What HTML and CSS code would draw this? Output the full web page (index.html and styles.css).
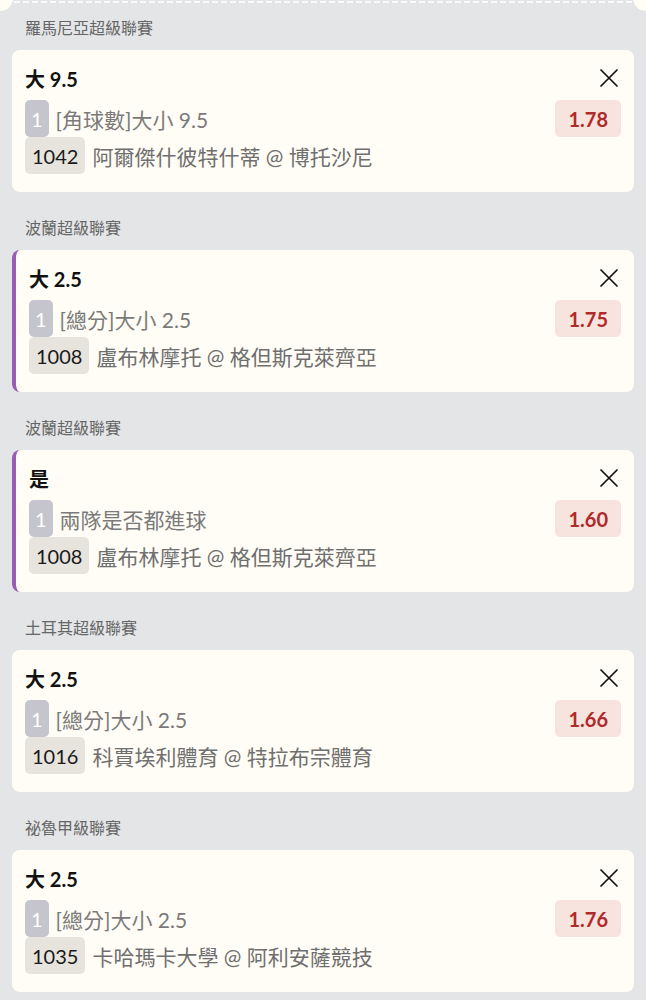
FILE: index.html
```html
<!DOCTYPE html>
<html lang="zh-Hant">
<head>
    <meta charset="UTF-8">
    <meta name="viewport" content="width=device-width, initial-scale=1.0">
    <title>投注單</title>
    <link rel="stylesheet" href="styles.css">
</head>
<body>

<div class="ticket-edge"></div>

<div class="slip">
    <div class="league">羅馬尼亞超級聯賽</div>
    <div class="bet">
        <div class="bet-head">
            <span class="bet-pick">大 9.5</span>
            <button class="close" aria-label="移除">
                <svg width="20" height="20" viewBox="0 0 20 20"><path d="M1.5 1.5L18.5 18.5M18.5 1.5L1.5 18.5" stroke="#111" stroke-width="1.7" fill="none"/></svg>
            </button>
        </div>
        <div class="bet-row">
            <span class="leg">1</span>
            <span class="market">[角球數]大小 9.5</span>
            <span class="odds">1.78</span>
        </div>
        <div class="bet-row">
            <span class="match-no">1042</span>
            <span class="match">阿爾傑什彼特什蒂 @ 博托沙尼</span>
        </div>
    </div>

    <div class="league">波蘭超級聯賽</div>
    <div class="bet linked">
        <div class="bet-head">
            <span class="bet-pick">大 2.5</span>
            <button class="close" aria-label="移除">
                <svg width="20" height="20" viewBox="0 0 20 20"><path d="M1.5 1.5L18.5 18.5M18.5 1.5L1.5 18.5" stroke="#111" stroke-width="1.7" fill="none"/></svg>
            </button>
        </div>
        <div class="bet-row">
            <span class="leg">1</span>
            <span class="market">[總分]大小 2.5</span>
            <span class="odds">1.75</span>
        </div>
        <div class="bet-row">
            <span class="match-no">1008</span>
            <span class="match">盧布林摩托 @ 格但斯克萊齊亞</span>
        </div>
    </div>

    <div class="league">波蘭超級聯賽</div>
    <div class="bet linked">
        <div class="bet-head">
            <span class="bet-pick">是</span>
            <button class="close" aria-label="移除">
                <svg width="20" height="20" viewBox="0 0 20 20"><path d="M1.5 1.5L18.5 18.5M18.5 1.5L1.5 18.5" stroke="#111" stroke-width="1.7" fill="none"/></svg>
            </button>
        </div>
        <div class="bet-row">
            <span class="leg">1</span>
            <span class="market">兩隊是否都進球</span>
            <span class="odds">1.60</span>
        </div>
        <div class="bet-row">
            <span class="match-no">1008</span>
            <span class="match">盧布林摩托 @ 格但斯克萊齊亞</span>
        </div>
    </div>

    <div class="league">土耳其超級聯賽</div>
    <div class="bet">
        <div class="bet-head">
            <span class="bet-pick">大 2.5</span>
            <button class="close" aria-label="移除">
                <svg width="20" height="20" viewBox="0 0 20 20"><path d="M1.5 1.5L18.5 18.5M18.5 1.5L1.5 18.5" stroke="#111" stroke-width="1.7" fill="none"/></svg>
            </button>
        </div>
        <div class="bet-row">
            <span class="leg">1</span>
            <span class="market">[總分]大小 2.5</span>
            <span class="odds">1.66</span>
        </div>
        <div class="bet-row">
            <span class="match-no">1016</span>
            <span class="match">科賈埃利體育 @ 特拉布宗體育</span>
        </div>
    </div>

    <div class="league">祕魯甲級聯賽</div>
    <div class="bet">
        <div class="bet-head">
            <span class="bet-pick">大 2.5</span>
            <button class="close" aria-label="移除">
                <svg width="20" height="20" viewBox="0 0 20 20"><path d="M1.5 1.5L18.5 18.5M18.5 1.5L1.5 18.5" stroke="#111" stroke-width="1.7" fill="none"/></svg>
            </button>
        </div>
        <div class="bet-row">
            <span class="leg">1</span>
            <span class="market">[總分]大小 2.5</span>
            <span class="odds">1.76</span>
        </div>
        <div class="bet-row">
            <span class="match-no">1035</span>
            <span class="match">卡哈瑪卡大學 @ 阿利安薩競技</span>
        </div>
    </div>
</div>

</body>
</html>
```

FILE: styles.css
```css
body {
    margin: 0;
    background-color: #e4e5e7;
    font-family: 'Lato', 'Noto Sans CJK TC', sans-serif;
    color: #111;
}

/* bottom edge of the ticket above */
.ticket-edge {
    position: relative;
    height: 4px;
    margin: 0 14px;
    background: repeating-linear-gradient(90deg, #fafafa 0 6px, transparent 6px 9px) 0 1px / 100% 2px no-repeat;
}

.ticket-edge::before,
.ticket-edge::after {
    content: '';
    position: absolute;
    top: -15px;
    width: 26px;
    height: 26px;
    border-radius: 50%;
    background-color: #fffdf5;
}

.ticket-edge::before {
    left: -27px;
}

.ticket-edge::after {
    right: -27px;
}

.slip {
    padding: 0 12px;
}

.league {
    padding: 12px 13px 10px;
    font-size: 16px;
    line-height: 24px;
    color: #666;
}

.bet {
    background-color: #fffdf5;
    border-radius: 8px;
    padding: 14px 13px 18px;
    margin-bottom: 12px;
}

.bet.linked {
    border-left: 4px solid #9b5cb4;
}

.bet-head {
    display: flex;
    align-items: center;
    justify-content: space-between;
    height: 28px;
    margin-bottom: 8px;
}

.bet-pick {
    font-size: 20px;
    font-weight: 700;
}

.close {
    display: flex;
    padding: 0;
    margin-right: 2px;
    border: none;
    background: none;
    cursor: pointer;
}

.bet-row {
    display: flex;
    align-items: center;
    height: 37px;
    font-size: 21px;
}

.leg,
.match-no {
    display: flex;
    align-items: center;
    height: 100%;
    border-radius: 5px;
    margin-right: 7px;
    font-size: 20px;
}

.leg {
    padding: 0 6px;
    background-color: #c5c5cd;
    color: #fff;
}

.match-no {
    padding: 0 7px;
    background-color: #e7e4dd;
    color: #1a1a1a;
}

.market {
    flex: 1;
    color: #7a7a7a;
}

.match {
    color: #6f6f6f;
}

.odds {
    display: flex;
    align-items: center;
    height: 100%;
    padding: 0 13px;
    border-radius: 5px;
    background-color: #f7e4de;
    color: #b02a2a;
    font-size: 20px;
    font-weight: 700;
}
```
